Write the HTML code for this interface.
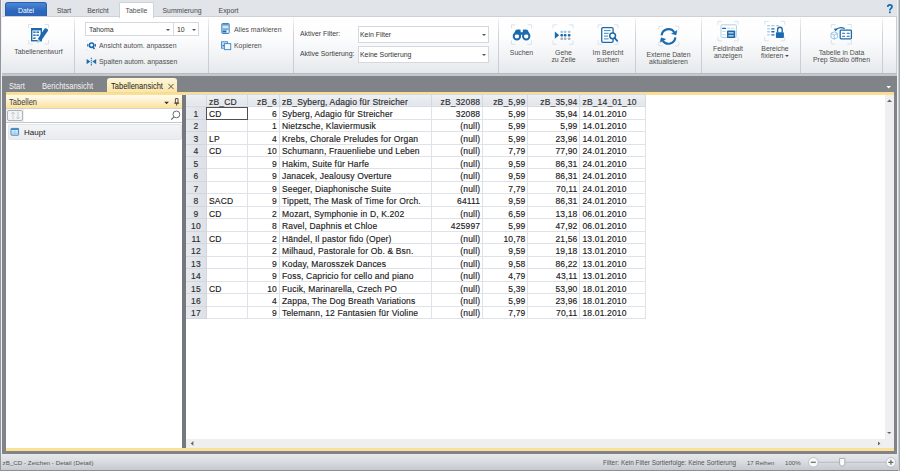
<!DOCTYPE html>
<html><head><meta charset="utf-8">
<style>
*{margin:0;padding:0;box-sizing:border-box}
html,body{width:900px;height:471px;overflow:hidden}
body{position:relative;background:#e1e4e8;font-family:"Liberation Sans",sans-serif;color:#3b3b3b}
.a{position:absolute}
.t{position:absolute;white-space:pre;line-height:1}
/* frame */
#lb{left:0;top:0;width:2px;height:471px;background:linear-gradient(90deg,#92969c 0,#92969c 1px,#eef0f3 1px)}
#rb{left:897px;top:0;width:3px;height:471px;background:linear-gradient(90deg,#eef0f2 0,#eef0f2 1px,#c9ccd0 1px,#c9ccd0 2px,#a2a6ab 2px)}
/* top tabs */
.tab{position:absolute;top:2px;height:15px;font-size:6.9px;color:#444;text-align:center;line-height:15px}
#datei{left:5px;width:42px;background:linear-gradient(#4a86d8,#2d68bd 55%,#2a62b6);border-radius:3px 3px 0 0;color:#fff;border:1px solid #2b5fa8;border-bottom:none}
#tabelle{left:119px;width:35px;top:2px;height:15.5px;background:#fff;border:1px solid #cfd3d8;color:#505050;font-size:6.9px;border-bottom:none;border-radius:2px 2px 0 0}
/* ribbon */
#rib{left:2px;top:16px;width:895px;border-right:1px solid #c9ccd1;height:58px;background:linear-gradient(#ffffff 0%,#fdfdfe 35%,#f1f3f5 70%,#e5e8ec 100%);border-top:1px solid #cdd1d6;border-bottom:1px solid #b9bcc1}
.sep{position:absolute;top:18px;width:1px;height:55px;background:linear-gradient(#f0f2f4,#d0d4d9 30%,#c9cdd3)}
.lbl{position:absolute;font-size:7.5px;color:#4e4e4e;white-space:pre;text-align:center;line-height:7.6px;margin-top:0.5px;transform:scaleX(0.92)}
.combo{position:absolute;background:#fff;border:1px solid #d5d9de}
.arr{position:absolute;width:0;height:0;border-left:2px solid transparent;border-right:2px solid transparent;border-top:2px solid #555}
.bk{position:absolute;border:1px dashed #c7d3e0}
/* doc area */
#dark{left:2px;top:74px;width:895px;height:380px;background:#808388}
#ribsh{left:2px;top:74px;width:895px;height:2px;background:#c5c8cc}
.dtab{position:absolute;top:80px;height:13px;font-size:8.2px;color:#f4f4f4;line-height:13px;transform:scaleX(0.92);transform-origin:0 0;white-space:pre}
#atab{left:107px;top:78px;width:70px;height:15px;background:linear-gradient(#fef6da,#fbe5a4);border-radius:3px 3px 0 0}
#ystrip{left:6px;top:91.7px;width:888px;height:3px;background:linear-gradient(#f6dc92,#fbe197)}
#ybot{left:6px;top:448px;width:888px;height:2.6px;background:#fbe197}
/* panel */
#panel{left:6px;top:95px;width:176px;height:353px;background:#fff}
#phead{left:6px;top:94.6px;width:176px;height:14px;background:linear-gradient(#fefbf1 0%,#fdf4d8 35%,#fce9b4 75%,#fbe29c 100%);border-bottom:1px solid #d3d0c4}
#split{left:182px;top:95px;width:4px;height:353px;background:#75797f}
/* grid */
#grid{left:186px;top:95px;width:699px;height:344px;background:#fff}
#vsb{left:885px;top:95px;width:9px;height:353px;background:#efefef}
#hsb{left:186px;top:438.5px;width:699px;height:9.5px;background:#efefef}
table{border-collapse:collapse;position:absolute;left:186px;top:93.5px;font-size:8.5px;letter-spacing:0.16px;color:#1a1a1a;-webkit-text-stroke:0.15px #1a1a1a}
td{height:12.47px;border:1px solid #dfe2e6;padding:2.9px 2px 0;white-space:nowrap;line-height:8.5px;vertical-align:top}
tr.h td{height:12.6px;padding-top:3.5px;line-height:8px;border-top-color:#fbe3a0;background:linear-gradient(#eef0f3,#e1e5ea);color:#333;border-color:#d6dae0}
td.n{background:linear-gradient(90deg,#e6e9ee,#dde1e7);text-align:center;color:#333;border-color:#d3d7dd}
td.r{text-align:right}

td.n{border-left:none}
/* status */
#stat{left:1px;top:453.5px;width:897px;height:17.5px;background:linear-gradient(#e7e9ec 0%,#dadde1 45%,#c6cacf 100%);border-bottom:1px solid #8c9095}
.st{position:absolute;font-size:6.3px;color:#555;white-space:pre;line-height:1}
</style></head><body>
<div class="a" id="lb"></div>
<div class="a" id="rb"></div>

<!-- top tabs -->
<div class="tab" id="datei">Datei</div>
<div class="tab" style="left:52px;width:24px;font-size:7.5px;transform:scaleX(0.92);color:#4a4a4a;top:2.5px">Start</div>
<div class="tab" style="left:84px;width:28px;font-size:7.5px;transform:scaleX(0.92);color:#4a4a4a;top:2.5px">Bericht</div>
<div class="a" id="rib"></div>
<div class="tab" id="tabelle">Tabelle</div>
<div class="tab" style="left:158px;width:48px;font-size:7.5px;transform:scaleX(0.92);color:#4a4a4a;top:2.5px">Summierung</div>
<div class="tab" style="left:214px;width:29px;font-size:7.5px;transform:scaleX(0.92);color:#4a4a4a;top:2.5px">Export</div>
<svg class="a" style="left:884px;top:2px" width="12" height="13" viewBox="884 2 12 13"><path d="M887.7 7Q887.8 4.9 889.9 4.9Q892 4.9 892 6.8Q892 7.9 890.8 8.6Q889.9 9.2 889.9 10.4" fill="none" stroke="#1767b3" stroke-width="1.7"/><circle cx="889.9" cy="12.2" r="1" fill="#1767b3"/></svg>

<!-- separators -->
<div class="sep" style="left:74px"></div>
<div class="sep" style="left:208px"></div>
<div class="sep" style="left:293px"></div>
<div class="sep" style="left:498px"></div>
<div class="sep" style="left:635px"></div>
<div class="sep" style="left:701px"></div>
<div class="sep" style="left:800px"></div>
<div class="sep" style="left:882px"></div>

<!-- group 1 -->
<div class="lbl" style="left:10px;top:47.6px;width:57px">Tabellenentwurf</div>

<!-- group 2 -->
<div class="combo" style="left:85px;top:22px;width:89px;height:14px"></div>
<div class="combo" style="left:173px;top:22px;width:26px;height:14px"></div>
<div class="t" style="left:89px;top:25.5px;font-size:7.5px;transform:scaleX(0.92);transform-origin:0 0;color:#333">Tahoma</div>
<div class="t" style="left:177px;top:25.5px;font-size:7.5px;transform:scaleX(0.92);transform-origin:0 0;color:#333">10</div>
<div class="arr" style="left:166px;top:29px"></div>
<div class="arr" style="left:192px;top:29px"></div>
<div class="t" style="left:99px;top:41.7px;font-size:7.5px;transform:scaleX(0.92);transform-origin:0 0;color:#4e4e4e">Ansicht autom. anpassen</div>
<div class="t" style="left:99px;top:57.7px;font-size:7.5px;transform:scaleX(0.92);transform-origin:0 0;color:#4e4e4e">Spalten autom. anpassen</div>

<!-- group 3 -->
<div class="t" style="left:234px;top:25.8px;font-size:7.5px;transform:scaleX(0.92);transform-origin:0 0;color:#4e4e4e">Alles markieren</div>
<div class="t" style="left:234px;top:41.8px;font-size:7.5px;transform:scaleX(0.92);transform-origin:0 0;color:#4e4e4e">Kopieren</div>

<!-- group 4 -->
<div class="t" style="left:300px;top:30px;font-size:7.5px;transform:scaleX(0.92);transform-origin:0 0;color:#404040">Aktiver Filter:</div>
<div class="t" style="left:300px;top:49.5px;font-size:7.5px;transform:scaleX(0.92);transform-origin:0 0;color:#404040">Aktive Sortierung:</div>
<div class="combo" style="left:358px;top:26px;width:131px;height:17px"></div>
<div class="combo" style="left:358px;top:46px;width:131px;height:17px"></div>
<div class="t" style="left:360px;top:30.7px;font-size:7.5px;transform:scaleX(0.92);transform-origin:0 0;color:#333">Kein Filter</div>
<div class="t" style="left:360px;top:50.5px;font-size:7.5px;transform:scaleX(0.92);transform-origin:0 0;color:#333">Keine Sortierung</div>
<div class="arr" style="left:482px;top:34px"></div>
<div class="arr" style="left:482px;top:54px"></div>

<!-- group 5 -->
<div class="lbl" style="left:501px;top:48px;width:41px">Suchen</div>
<div class="lbl" style="left:543px;top:48px;width:41px">Gehe
zu Zeile</div>
<div class="lbl" style="left:585px;top:48px;width:46px">Im Bericht
suchen</div>

<!-- group 6 -->
<div class="lbl" style="left:638px;top:50px;width:61px">Externe Daten
aktualisieren</div>

<!-- group 7 -->
<div class="lbl" style="left:707px;top:44px;width:42px">Feldinhalt
anzeigen</div>
<div class="lbl" style="left:754px;top:44px;width:42px">Bereiche
fixieren <span style="display:inline-block;width:0;height:0;border-left:2.2px solid transparent;border-right:2.2px solid transparent;border-top:2.4px solid #444;vertical-align:1px"></span></div>

<!-- group 8 -->
<div class="lbl" style="left:805px;top:48px;width:73px">Tabelle in Data
Prep Studio öffnen</div>

<svg id="icons" class="a" style="left:0;top:0" width="900" height="471" viewBox="0 0 900 471">
<!-- Tabellenentwurf -->
<g transform="translate(28,24)">
<path d="M0.5 4V0.5H4.5M16.5 0.5H20.5V4M20.5 16V20H16.5M4.5 20H0.5V16" fill="none" stroke="#d6e0ea" stroke-width="0.9"/>
<rect x="3.7" y="4.7" width="9.6" height="12" fill="#fff" stroke="#1b6aae" stroke-width="1.4"/>
<rect x="3" y="4" width="11" height="2.4" fill="#1b6aae"/>
<g fill="#2a7bbd"><rect x="5.2" y="7.4" width="2.4" height="1.6"/><rect x="8.4" y="7.4" width="2.6" height="1.6"/><rect x="5.2" y="10.4" width="2.4" height="1.6"/><rect x="8.4" y="10.4" width="2.4" height="1.6"/><rect x="5.2" y="13.4" width="2.4" height="1.6"/></g>
<path d="M16.6 4.6Q17.4 3.8 18.4 4.4L19.6 5.2Q20.4 6 19.8 7L12.8 17.2L9.8 15.1Z" fill="#1b6aae"/>
<path d="M9.8 15.1L12.8 17.2L9 19.2Z" fill="#a9c9e4"/>
</g>
<!-- Ansicht autom -->
<g transform="translate(82,38)">
<path d="M4.6 3.2V2.4H6M13 2.4H14.4V3.2M4.6 11V11.8H6M13 11.8H14.4V11" fill="none" stroke="#dbe3ec" stroke-width="0.7"/>
<circle cx="9.6" cy="7.2" r="2.2" fill="none" stroke="#1b6aae" stroke-width="1.6"/>
<path d="M10.8 8.8L12.4 11" stroke="#1b6aae" stroke-width="1.6"/>
<path d="M5.2 5.8L6.4 6.4V8.2L5.2 8.8Z" fill="#1b6aae"/>
<path d="M14 5.8L12.8 6.4V8.2L14 8.8Z" fill="#1b6aae"/>
</g>
<!-- Spalten autom -->
<g transform="translate(82,38)">
<path d="M4.6 20.9L8.4 23.6L4.6 26.3Z" fill="#1b6aae"/>
<path d="M14.2 20.9L10.4 23.6L14.2 26.3Z" fill="#1b6aae"/>
<path d="M9.4 19.8V28" stroke="#3d86c2" stroke-width="1.3" stroke-dasharray="1.4 0.7"/>
</g>
<!-- Alles markieren -->
<g transform="translate(218,20)">
<rect x="3.8" y="3.5" width="7.4" height="10" rx="0.7" fill="#bcd8ee" stroke="#3a86c2" stroke-width="1"/>
<rect x="4.3" y="4" width="6.4" height="1.4" fill="#5a9bd0"/>
<rect x="4.8" y="6.6" width="5.4" height="0.9" fill="#eef5fb"/>
<rect x="4.8" y="8.6" width="5.4" height="0.9" fill="#3a86c2"/>
<rect x="4.6" y="10.6" width="4" height="1.8" fill="#1b6aae"/>
<rect x="8.6" y="10.6" width="1.9" height="1.8" fill="#fff"/>
</g>
<!-- Kopieren -->
<g transform="translate(218,20)">
<rect x="3.5" y="21.8" width="6" height="6.4" fill="#d3e5f3" stroke="#4a90c8" stroke-width="1"/>
<rect x="6.4" y="23.6" width="6.3" height="6" fill="#f4f8fc" stroke="#4a90c8" stroke-width="1"/>
<path d="M4.6 24.4L6.6 25.6L4.6 26.8Z" fill="#1b6aae"/>
</g>
<!-- Suchen -->
<g transform="translate(511,24.3)">
<path d="M0.5 4V0.5H4.5M16.5 0.5H20.5V4M20.5 16V20H16.5M4.5 20H0.5V16" fill="none" stroke="#d6e0ea" stroke-width="0.9"/>
</g>
<g transform="translate(508,22)" fill="#1b6aae">
<path d="M5.6 12.6L7.6 8.2Q8.2 7.4 9.6 7.4H11.6Q12.6 7.4 12.6 8.6V12.6Z"/>
<path d="M21.8 12.6L19.8 8.2Q19.2 7.4 17.8 7.4H15.8Q14.8 7.4 14.8 8.6V12.6Z"/>
<rect x="12" y="10.2" width="3.4" height="2.6"/>
<circle cx="8.9" cy="14.3" r="3.2" fill="none" stroke="#1b6aae" stroke-width="2"/>
<circle cx="18.2" cy="14.3" r="3.2" fill="none" stroke="#1b6aae" stroke-width="2"/>
</g>
<!-- Gehe zu Zeile -->
<g transform="translate(552.5,24.3)"><path d="M0.5 4V0.5H4.5M16.5 0.5H20.5V4M20.5 16V20H16.5M4.5 20H0.5V16" fill="none" stroke="#d6e0ea" stroke-width="0.9"/></g>
<g transform="translate(550,22)">
<path d="M4.8 9.6L9.2 13.2L4.8 16.8Z" fill="#1b6aae"/>
<g fill="#9cc7e4"><rect x="10.4" y="8.7" width="2.7" height="2.3" rx="0.9"/><rect x="13.8" y="8.7" width="2.7" height="2.3" rx="0.9"/><rect x="17.8" y="8.7" width="2.7" height="2.3" rx="0.9"/></g>
<g fill="#1b6aae"><rect x="10.4" y="12.1" width="2.7" height="2.3" rx="0.9"/><rect x="13.8" y="12.1" width="2.7" height="2.3" rx="0.9"/><rect x="17.8" y="12.1" width="2.7" height="2.3" rx="0.9"/></g>
<g fill="#a9b2ba"><rect x="10.4" y="15.6" width="2.7" height="2.3" rx="0.9"/><rect x="13.8" y="15.6" width="2.7" height="2.3" rx="0.9"/><rect x="17.8" y="15.6" width="2.7" height="2.3" rx="0.9"/></g>
</g>
<!-- Im Bericht suchen -->
<g transform="translate(597.5,24.3)"><path d="M0.5 4V0.5H4.5M16.5 0.5H20.5V4M20.5 16V20H16.5M4.5 20H0.5V16" fill="none" stroke="#d6e0ea" stroke-width="0.9"/></g>
<g transform="translate(595,22)">
<rect x="6.7" y="5.7" width="11.4" height="14.6" rx="1.2" fill="#fff" stroke="#1b6aae" stroke-width="1.3"/>
<g fill="#3b88c4"><rect x="9" y="8.1" width="6.6" height="1"/><rect x="9" y="10.8" width="4.6" height="1"/><rect x="9" y="13.6" width="4" height="1"/><rect x="9" y="16.4" width="4.6" height="1"/></g>
<circle cx="17.6" cy="13.8" r="2.9" fill="#fff" stroke="#1b6aae" stroke-width="1.5"/>
<path d="M19.6 15.9L22.2 18.9" stroke="#1b6aae" stroke-width="1.7" stroke-linecap="round"/>
</g>
<!-- Externe Daten -->
<g transform="translate(658.3,25.8)"><path d="M0.5 4V0.5H4.5M16.5 0.5H20.5V4M20.5 16V20H16.5M4.5 20H0.5V16" fill="none" stroke="#d6e0ea" stroke-width="0.9"/></g>
<g transform="translate(655,22)" fill="none" stroke="#1b6aae" stroke-width="2.1">
<path d="M6.6 13.4A7 7 0 0 1 19.2 10"/>
<path d="M20.4 15.4A7 7 0 0 1 7.8 18.8"/>
<path d="M22 8.6L21 13L16.6 11.6Z" fill="#1b6aae" stroke-width="0.5"/>
<path d="M5.2 20.2L6.2 15.8L10.6 17.2Z" fill="#1a66a8" stroke="#1a66a8" stroke-width="0.5"/>
</g>
<!-- Feldinhalt -->
<g transform="translate(717.5,20.8)"><path d="M0.5 4V0.5H4.5M16.5 0.5H20.5V4M20.5 16V20H16.5M4.5 20H0.5V16" fill="none" stroke="#d6e0ea" stroke-width="0.9"/></g>
<g transform="translate(714,17)">
<rect x="7" y="7.8" width="15.4" height="12.6" rx="1" fill="#fff" stroke="#a9cbe4" stroke-width="0.9"/>
<rect x="8" y="10.7" width="4.2" height="1.2" rx="0.6" fill="#1b6aae"/>
<g fill="#b6d3ea"><rect x="13.2" y="10.8" width="3" height="0.9"/><rect x="17" y="10.8" width="3" height="0.9"/><rect x="8.4" y="13.9" width="3" height="0.9"/><rect x="8.4" y="17.2" width="3" height="0.9"/></g>
<rect x="13" y="13.5" width="8.2" height="7.6" rx="0.8" fill="#1b6aae"/>
<rect x="14.4" y="15.3" width="5.2" height="1.1" fill="#e8f1f8"/>
<rect x="14.4" y="18.3" width="5.2" height="1.1" fill="#e8f1f8"/>
</g>
<!-- Bereiche fixieren -->
<g transform="translate(764.2,20.8)"><path d="M0.5 4V0.5H4.5M16.5 0.5H20.5V4M20.5 16V20H16.5M4.5 20H0.5V16" fill="none" stroke="#d6e0ea" stroke-width="0.9"/></g>
<g transform="translate(761,17)">
<g fill="#a9cbe4"><rect x="6" y="8" width="3" height="1.3" rx="0.6"/><rect x="10.2" y="8" width="3.4" height="1.3" rx="0.6"/><rect x="15" y="8" width="3" height="1.3" rx="0.6"/><rect x="6" y="11.3" width="3" height="1.3" rx="0.6"/><rect x="6" y="14.1" width="3" height="1.3" rx="0.6"/><rect x="6" y="17.3" width="3" height="1.3" rx="0.6"/></g>
<g fill="#1b6aae"><rect x="10.2" y="11.3" width="3.4" height="1.3" rx="0.6"/><rect x="10.2" y="14.1" width="3.4" height="1.3" rx="0.6"/><rect x="10.2" y="17.3" width="3.4" height="1.3" rx="0.6"/></g>
<path d="M16.6 15.4V12.6A2.3 2.3 0 0 1 21.2 12.6V15.4" fill="none" stroke="#1b6aae" stroke-width="1.4"/>
<rect x="14.9" y="15.2" width="8" height="5.8" rx="0.8" fill="#1b6aae"/>
</g>
<!-- Data Prep Studio -->
<g transform="translate(830.8,24)"><path d="M0.5 4V0.5H4.5M16.5 0.5H20.5V4M20.5 16V20H16.5M4.5 20H0.5V16" fill="none" stroke="#d6e0ea" stroke-width="0.9"/></g>
<g transform="translate(827,20)">
<path d="M4 13.4L7.2 11.8L10.4 13.4V17.6L7.2 19.2L4 17.6Z" fill="#fff" stroke="#7fb2d9" stroke-width="0.8"/>
<path d="M4 13.4L7.2 15L10.4 13.4M7.2 15V19.2" fill="none" stroke="#7fb2d9" stroke-width="0.8"/>
<path d="M8.4 10.2Q12.5 6.2 17.6 8.6" fill="none" stroke="#1b6aae" stroke-width="1.3"/>
<path d="M6.8 8.8L10 8.6L8.6 11.4Z" fill="#1b6aae"/>
<rect x="13.2" y="10.2" width="11.2" height="8.6" rx="0.8" fill="#fff" stroke="#1b6aae" stroke-width="1.3"/>
<g fill="#1b6aae"><rect x="15" y="12.8" width="3.2" height="1" rx="0.5"/><rect x="19.6" y="12.8" width="3.2" height="1" rx="0.5"/><rect x="15" y="15.8" width="3.2" height="1" rx="0.5"/><rect x="19.6" y="15.8" width="3.2" height="1" rx="0.5"/></g>
</g>
<!-- help -->
<path d="M886 4.5H893M886 12.5H893" stroke="#dbe3ec" stroke-width="0" />
</svg>

<!-- doc area -->
<div class="a" id="dark"></div>
<div class="a" id="ribsh"></div>
<div class="dtab" style="left:9px">Start</div>
<div class="dtab" style="left:42px">Berichtsansicht</div>
<div class="a" id="atab"></div>
<div class="t" style="left:111px;top:83px;font-size:8.2px;color:#222;transform:scaleX(0.92);transform-origin:0 0">Tabellenansicht</div>
<svg class="a" style="left:167px;top:83px" width="8" height="7" viewBox="0 0 8 7"><path d="M1.4 0.9L6.6 6.1M6.6 0.9L1.4 6.1" stroke="#4a4a4a" stroke-width="0.95"/></svg>
<div class="a" id="ystrip"></div>

<div class="a" id="panel"></div>
<div class="a" id="phead"></div>
<div class="t" style="left:8.5px;top:99.2px;font-size:8.2px;color:#3a3a3a;transform:scaleX(0.92);transform-origin:0 0">Tabellen</div>
<div class="a" id="split"></div>
<div class="a" style="left:6px;top:108px;width:176px;height:15px;background:#eef0f2;border-top:1px solid #d6d3c8;border-bottom:1px solid #c5c9ce"></div>
<div class="a" style="left:24px;top:109px;width:158px;height:13px;background:#fff"></div>
<div class="a" style="left:7px;top:110px;width:16px;height:11px;background:#f3f4f5;border:1px solid #aeb2b8;border-radius:2px"></div>
<svg class="a" style="left:6.5px;top:109px" width="17" height="13" viewBox="0 0 17 13"><path d="M6 3V10.5M4 5L6 3L8 5M11 2.5V10M9 8L11 10L13 8" fill="none" stroke="#c5c8cc" stroke-width="0.9"/></svg>
<div class="a" style="left:7.5px;top:124px;width:174px;height:15.5px;background:linear-gradient(#f3f4f6,#e9ebee);border:1px solid #e3e5e8;border-radius:2px"></div>
<div class="t" style="left:24px;top:129px;font-size:8px;color:#222">Haupt</div>
<svg class="a" style="left:0;top:92px" width="186" height="50" viewBox="0 92 186 50">
<path d="M164.3 101.8H168.9L166.6 104.3Z" fill="#333"/>
<path d="M175.4 98.6H178V103H175.4Z" fill="none" stroke="#444" stroke-width="0.9"/>
<path d="M174.2 103.2H179.2M176.7 103.2V105.6" stroke="#444" stroke-width="1"/>
<circle cx="176.4" cy="114.4" r="3.4" fill="none" stroke="#6a6e73" stroke-width="1"/>
<path d="M173.9 116.9L171.3 119.6" stroke="#6a6e73" stroke-width="1.3"/>
<rect x="11" y="128.4" width="7.6" height="6.8" rx="0.5" fill="#e6f0f8" stroke="#3f89c4" stroke-width="1"/>
<rect x="11" y="128.4" width="7.6" height="1.6" fill="#3f89c4"/>
<path d="M11.5 131.9H18.1M11.5 133.6H18.1" stroke="#8dbbe0" stroke-width="0.7"/>
<path d="M14.8 130V135" stroke="#8dbbe0" stroke-width="0.6"/>
</svg>

<div class="a" id="grid"></div>
<div class="a" id="vsb"></div>
<div class="a" id="hsb"></div>
<table id="tbl"><colgroup><col style="width:20.5px"><col style="width:41px"><col style="width:32px"><col style="width:151.7px"><col style="width:51.5px"><col style="width:45.3px"><col style="width:52px"><col style="width:66px"></colgroup>
<tr class="h"><td class="n"></td><td>zB_CD</td><td class="r">zB_6</td><td>zB_Syberg, Adagio für Streicher</td><td class="r">zB_32088</td><td class="r">zB_5,99</td><td class="r">zB_35,94</td><td>zB_14_01_10</td></tr>
<tr><td class="n">1</td><td class="sel">CD</td><td class="r">6</td><td>Syberg, Adagio für Streicher</td><td class="r">32088</td><td class="r">5,99</td><td class="r">35,94</td><td>14.01.2010</td></tr>
<tr><td class="n">2</td><td></td><td class="r">1</td><td>Nietzsche, Klaviermusik</td><td class="r">(null)</td><td class="r">5,99</td><td class="r">5,99</td><td>14.01.2010</td></tr>
<tr><td class="n">3</td><td>LP</td><td class="r">4</td><td>Krebs, Chorale Preludes for Organ</td><td class="r">(null)</td><td class="r">5,99</td><td class="r">23,96</td><td>14.01.2010</td></tr>
<tr><td class="n">4</td><td>CD</td><td class="r">10</td><td>Schumann, Frauenliebe und Leben</td><td class="r">(null)</td><td class="r">7,79</td><td class="r">77,90</td><td>24.01.2010</td></tr>
<tr><td class="n">5</td><td></td><td class="r">9</td><td>Hakim, Suite für Harfe</td><td class="r">(null)</td><td class="r">9,59</td><td class="r">86,31</td><td>24.01.2010</td></tr>
<tr><td class="n">6</td><td></td><td class="r">9</td><td>Janacek, Jealousy Overture</td><td class="r">(null)</td><td class="r">9,59</td><td class="r">86,31</td><td>24.01.2010</td></tr>
<tr><td class="n">7</td><td></td><td class="r">9</td><td>Seeger, Diaphonische Suite</td><td class="r">(null)</td><td class="r">7,79</td><td class="r">70,11</td><td>24.01.2010</td></tr>
<tr><td class="n">8</td><td>SACD</td><td class="r">9</td><td>Tippett, The Mask of Time for Orch.</td><td class="r">64111</td><td class="r">9,59</td><td class="r">86,31</td><td>24.01.2010</td></tr>
<tr><td class="n">9</td><td>CD</td><td class="r">2</td><td>Mozart, Symphonie in D, K.202</td><td class="r">(null)</td><td class="r">6,59</td><td class="r">13,18</td><td>06.01.2010</td></tr>
<tr><td class="n">10</td><td></td><td class="r">8</td><td>Ravel, Daphnis et Chloe</td><td class="r">425997</td><td class="r">5,99</td><td class="r">47,92</td><td>06.01.2010</td></tr>
<tr><td class="n">11</td><td>CD</td><td class="r">2</td><td>Händel, Il pastor fido (Oper)</td><td class="r">(null)</td><td class="r">10,78</td><td class="r">21,56</td><td>13.01.2010</td></tr>
<tr><td class="n">12</td><td></td><td class="r">2</td><td>Milhaud, Pastorale for Ob. &amp; Bsn.</td><td class="r">(null)</td><td class="r">9,59</td><td class="r">19,18</td><td>13.01.2010</td></tr>
<tr><td class="n">13</td><td></td><td class="r">9</td><td>Koday, Marosszek Dances</td><td class="r">(null)</td><td class="r">9,58</td><td class="r">86,22</td><td>13.01.2010</td></tr>
<tr><td class="n">14</td><td></td><td class="r">9</td><td>Foss, Capricio for cello and piano</td><td class="r">(null)</td><td class="r">4,79</td><td class="r">43,11</td><td>13.01.2010</td></tr>
<tr><td class="n">15</td><td>CD</td><td class="r">10</td><td>Fucik, Marinarella, Czech PO</td><td class="r">(null)</td><td class="r">5,39</td><td class="r">53,90</td><td>18.01.2010</td></tr>
<tr><td class="n">16</td><td></td><td class="r">4</td><td>Zappa, The Dog Breath Variations</td><td class="r">(null)</td><td class="r">5,99</td><td class="r">23,96</td><td>18.01.2010</td></tr>
<tr><td class="n">17</td><td></td><td class="r">9</td><td>Telemann, 12 Fantasien für Violine</td><td class="r">(null)</td><td class="r">7,79</td><td class="r">70,11</td><td>18.01.2010</td></tr>
</table>
<div class="a" style="left:206px;top:107px;width:42px;height:13px;border:1px solid #505050"></div>
<div class="a" id="ybot"></div>

<div class="a" id="stat"></div>
<svg class="a" style="left:0;top:0" width="900" height="471" viewBox="0 0 900 471">
<path d="M886.4 86H891L888.7 88.4Z" fill="#fff"/>
<path d="M887 102H892L889.5 99.6Z" fill="#666"/>
<path d="M887 432H891.4L889.2 434Z" fill="#666"/>
<path d="M193.4 441V445.8L190.7 443.4Z" fill="#666"/>
<path d="M878 441.6V445.6L880.4 443.6Z" fill="#666"/>
<path d="M818 462.3H886" stroke="#b7bcc4" stroke-width="1"/>
<circle cx="813.3" cy="462.3" r="4.8" fill="#f7f8f9" stroke="#b9bdc3" stroke-width="0.9"/>
<path d="M810.8 462.3H815.8" stroke="#666" stroke-width="1.2"/>
<circle cx="890.9" cy="462.3" r="4.8" fill="#f7f8f9" stroke="#b9bdc3" stroke-width="0.9"/>
<path d="M888.4 462.3H893.4M890.9 459.8V464.8" stroke="#666" stroke-width="1.2"/>
<path d="M839.6 458.4H844.8V464.6L842.2 466.4L839.6 464.6Z" fill="#fafafa" stroke="#9ca1a8" stroke-width="0.8"/>
</svg>
<div class="st" style="left:2.5px;top:460px;font-size:6.25px">zB_CD - Zeichen - Detail (Detail)</div>
<div class="st" style="left:603px;top:460px;font-size:6.45px">Filter: Kein Filter Sortierfolge: Keine Sortierung</div>
<div class="st" style="left:747px;top:460.2px;font-size:6px">17 Reihen</div>
<div class="st" style="left:785px;top:460.2px;font-size:6.1px">100%</div>
</body></html>
